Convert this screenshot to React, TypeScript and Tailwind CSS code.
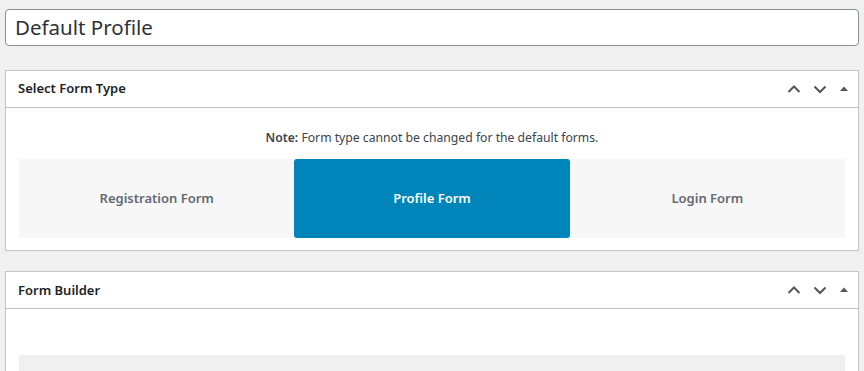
import React from "react";

function PanelControls() {
  return (
    <div className="flex items-center gap-[10px] text-[#50575e]">
      <svg width="16" height="16" viewBox="0 0 16 16" fill="none" stroke="currentColor" strokeWidth="2">
        <path d="M2.5 11 L8 5.5 L13.5 11" />
      </svg>
      <svg width="16" height="16" viewBox="0 0 16 16" fill="none" stroke="currentColor" strokeWidth="2">
        <path d="M2.5 5.5 L8 11 L13.5 5.5" />
      </svg>
      <svg width="12" height="16" viewBox="0 0 12 16" fill="currentColor">
        <path d="M2 10 L6 5.5 L10 10 Z" />
      </svg>
    </div>
  );
}

function Panel({ title, children }: { title: string; children: React.ReactNode }) {
  return (
    <div className="border border-[#c3c4c7] bg-white">
      <div className="flex h-[37px] items-center justify-between border-b border-[#c3c4c7] pl-[12px] pr-[8px]">
        <h2 className="text-[13px] font-semibold text-[#1d2327]">{title}</h2>
        <PanelControls />
      </div>
      {children}
    </div>
  );
}

export default function App() {
  const tabs = ["Registration Form", "Profile Form", "Login Form"];
  return (
    <div
      className="h-[371px] overflow-hidden bg-[#f0f0f1] px-[5px] pt-[9px]"
      style={{ fontFamily: '"Noto Sans", sans-serif' }}
    >
      <div className="flex h-[37px] items-center rounded-[4px] border border-[#8c8f94] bg-white px-[9px] text-[20.5px] text-[#2c3338]">
        Default Profile
      </div>

      <div className="mt-[24px]">
        <Panel title="Select Form Type">
          <div className="px-[13px] pb-[12px]">
            <p className="pt-[21px] text-center text-[12.2px] text-[#3c434a]">
              <span className="font-semibold">Note:</span> Form type cannot be changed for the default forms.
            </p>
            <div className="mt-[12px] grid h-[79px] grid-cols-3 bg-[#f7f7f7]">
              {tabs.map((t) => (
                <div
                  key={t}
                  className={
                    t === "Profile Form"
                      ? "flex items-center justify-center rounded-[3px] bg-[#0085ba] text-[13px] font-semibold text-white"
                      : "flex items-center justify-center text-[13px] font-semibold text-[#646970]"
                  }
                >
                  {t}
                </div>
              ))}
            </div>
          </div>
        </Panel>
      </div>

      <div className="mt-[20px]">
        <Panel title="Form Builder">
          <div className="px-[13px] pt-[46px]">
            <div className="h-[40px] bg-[#f0f0f1]" />
          </div>
        </Panel>
      </div>
    </div>
  );
}
